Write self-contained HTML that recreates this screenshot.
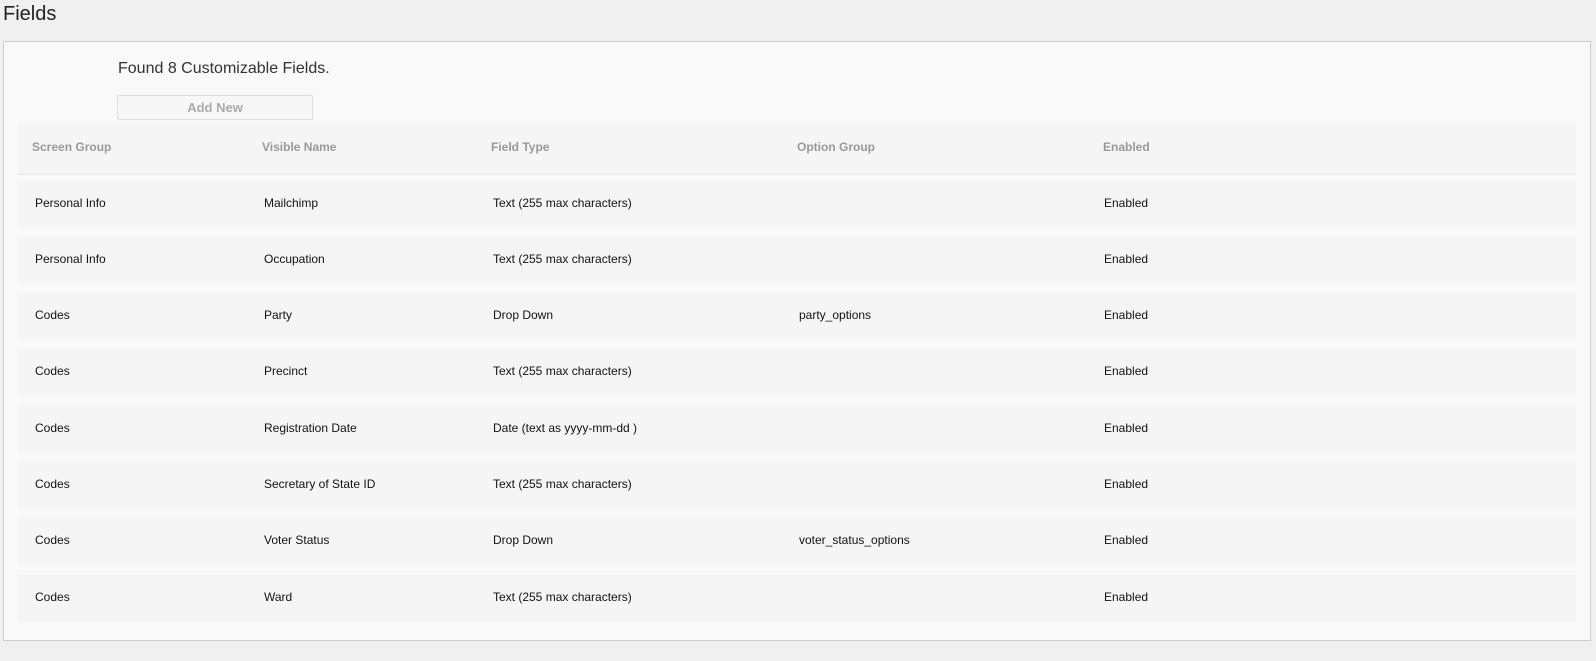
<!DOCTYPE html>
<html><head><style>
body{margin:0;background:#f0f0f0;font-family:"Liberation Sans",Arial,sans-serif;width:1596px;height:661px;position:relative;overflow:hidden}
h1{position:absolute;left:3px;top:3px;margin:0;font-size:20px;font-weight:normal;color:#222}
.panel{position:absolute;left:3px;top:41px;width:1586px;height:598px;background:#f9f9f9;border:1px solid #ccc}
.found{position:absolute;left:114px;top:18px;font-size:16px;color:#333}
.btn{position:absolute;left:113px;top:53px;width:194px;height:23px;border:1px solid #ddd;border-radius:2px;background:#f7f7f7;color:#aaa;font-weight:bold;font-size:13px;text-align:center;line-height:23px}
.hdr{position:absolute;left:14px;top:81px;width:1558px;height:50px;background:#f5f5f5;border-bottom:2px solid #ececec}
.row{position:absolute;left:14px;width:1558px;height:47px;background:#f5f5f5}
.c{position:absolute;top:0;line-height:44px;font-size:12px;color:#111;white-space:nowrap}
.hdr .c{line-height:48px;font-weight:bold;color:#999}
</style></head><body>
<h1>Fields</h1>
<div class="panel">
<div class="found">Found 8 Customizable Fields.</div>
<div class="btn">Add New</div>
<div class="hdr"><span class="c" style="left:14px">Screen Group</span><span class="c" style="left:244px">Visible Name</span><span class="c" style="left:473px">Field Type</span><span class="c" style="left:779px">Option Group</span><span class="c" style="left:1085px">Enabled</span></div>
<div class="row" style="top:139px"><span class="c" style="left:17px">Personal Info</span><span class="c" style="left:246px">Mailchimp</span><span class="c" style="left:475px">Text (255 max characters)</span><span class="c" style="left:1086px">Enabled</span></div>
<div class="row" style="top:195px"><span class="c" style="left:17px">Personal Info</span><span class="c" style="left:246px">Occupation</span><span class="c" style="left:475px">Text (255 max characters)</span><span class="c" style="left:1086px">Enabled</span></div>
<div class="row" style="top:251px"><span class="c" style="left:17px">Codes</span><span class="c" style="left:246px">Party</span><span class="c" style="left:475px">Drop Down</span><span class="c" style="left:781px">party_options</span><span class="c" style="left:1086px">Enabled</span></div>
<div class="row" style="top:307px"><span class="c" style="left:17px">Codes</span><span class="c" style="left:246px">Precinct</span><span class="c" style="left:475px">Text (255 max characters)</span><span class="c" style="left:1086px">Enabled</span></div>
<div class="row" style="top:364px"><span class="c" style="left:17px">Codes</span><span class="c" style="left:246px">Registration Date</span><span class="c" style="left:475px">Date (text as yyyy-mm-dd )</span><span class="c" style="left:1086px">Enabled</span></div>
<div class="row" style="top:420px"><span class="c" style="left:17px">Codes</span><span class="c" style="left:246px">Secretary of State ID</span><span class="c" style="left:475px">Text (255 max characters)</span><span class="c" style="left:1086px">Enabled</span></div>
<div class="row" style="top:476px"><span class="c" style="left:17px">Codes</span><span class="c" style="left:246px">Voter Status</span><span class="c" style="left:475px">Drop Down</span><span class="c" style="left:781px">voter_status_options</span><span class="c" style="left:1086px">Enabled</span></div>
<div class="row" style="top:533px"><span class="c" style="left:17px">Codes</span><span class="c" style="left:246px">Ward</span><span class="c" style="left:475px">Text (255 max characters)</span><span class="c" style="left:1086px">Enabled</span></div>
</div>
</body></html>
